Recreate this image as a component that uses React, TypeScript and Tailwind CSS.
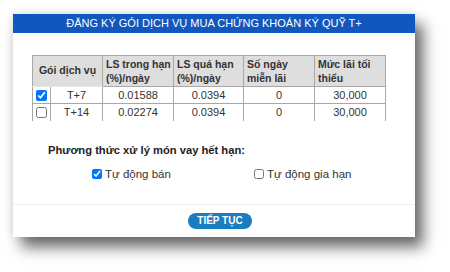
import React from 'react';

const rows = [
  { checked: true, name: 'T+7', inRate: '0.01588', overRate: '0.0394', freeDays: '0', min: '30,000' },
  { checked: false, name: 'T+14', inRate: '0.02274', overRate: '0.0394', freeDays: '0', min: '30,000' },
];

const headers = [
  ['LS trong hạn', '(%)/ngày'],
  ['LS quá hạn', '(%)/ngày'],
  ['Số ngày', 'miễn lãi'],
  ['Mức lãi tối', 'thiểu'],
];

const App: React.FC = () => {
  return (
    <div className="w-[450px] h-[272px] bg-white overflow-hidden" style={{ fontFamily: '"Liberation Sans", Arial, sans-serif' }}>
      <div className="ml-[13px] mt-[14px] w-[402px] h-[223px] bg-white flex flex-col shadow-[8px_10px_14px_rgba(0,0,0,0.6),-2px_-2px_8px_rgba(0,0,0,0.08)]">
        <div className="h-[19px] bg-[#1257bd] text-white text-[11px] flex items-center justify-center">
          ĐĂNG KÝ GÓI DỊCH VỤ MUA CHỨNG KHOÁN KÝ QUỸ T+
        </div>

        <div className="pl-[19px] pt-[22px]">
          <table className="border-collapse text-[11px] text-[#333] table-fixed w-[354px]">
            <colgroup>
              <col className="w-[18px]" />
              <col className="w-[52px]" />
              <col className="w-[71px]" />
              <col className="w-[70px]" />
              <col className="w-[71px]" />
              <col className="w-[71px]" />
            </colgroup>
            <thead>
              <tr className="h-[31px] bg-[#dedede]">
                <th colSpan={2} className="border border-[#a8a8a8] border-b-[#e6e6e6] text-center font-bold text-[10.5px] p-0">Gói dịch vụ</th>
                {headers.map((h) => (
                  <th key={h[0]} className="border border-[#a8a8a8] text-left font-bold text-[10.5px] px-[3px] py-0 leading-[14px] whitespace-nowrap">
                    {h[0]}
                    <br />
                    {h[1]}
                  </th>
                ))}
              </tr>
            </thead>
            <tbody>
              {rows.map((r, i) => (
                <tr key={r.name} className="h-[17px] leading-[15px]">
                  <td className={`border-l border-r border-[#a8a8a8] p-0 ${i === 0 ? 'border-b' : ''}`}>
                    <div className="flex items-center justify-center">
                      <input type="checkbox" defaultChecked={r.checked} className="w-[11px] h-[11px] m-0" />
                    </div>
                  </td>
                  <td className={`border-l border-r border-[#a8a8a8] text-center p-0 ${i === 0 ? 'border-b' : ''}`}>{r.name}</td>
                  <td className={`border-l border-r border-[#a8a8a8] text-center p-0 ${i === 0 ? 'border-b' : ''}`}>{r.inRate}</td>
                  <td className={`border-l border-r border-[#a8a8a8] text-center p-0 ${i === 0 ? 'border-b' : ''}`}>{r.overRate}</td>
                  <td className={`border-l border-r border-[#a8a8a8] text-center p-0 ${i === 0 ? 'border-b' : ''}`}>{r.freeDays}</td>
                  <td className={`border-l border-r border-[#a8a8a8] text-center p-0 ${i === 0 ? 'border-b' : ''}`}>{r.min}</td>
                </tr>
              ))}
            </tbody>
          </table>
        </div>

        <div className="pl-[35px] pt-[22px] text-[11.2px] leading-[14px] font-bold text-[#222]">
          Phương thức xử lý món vay hết hạn:
        </div>

        <div className="flex pt-[10px] text-[11.5px] leading-[14px] text-[#333]">
          <label className="ml-[79px] w-[162px] flex items-center gap-[3px]">
            <input type="checkbox" defaultChecked className="w-[10px] h-[10px] m-0" />
            Tự động bán
          </label>
          <label className="flex items-center gap-[3px]">
            <input type="checkbox" className="w-[10px] h-[10px] m-0" />
            Tự động gia hạn
          </label>
        </div>

        <div className="mt-auto border-t border-[#eeeeee] h-[33px] flex items-start justify-center pt-[8px] pl-[12px]">
          <button className="h-[16px] w-[64px] rounded-full bg-[#1a7dc0] text-white text-[10px] font-bold leading-none">
            TIẾP TỤC
          </button>
        </div>
      </div>
    </div>
  );
};

export default App;
